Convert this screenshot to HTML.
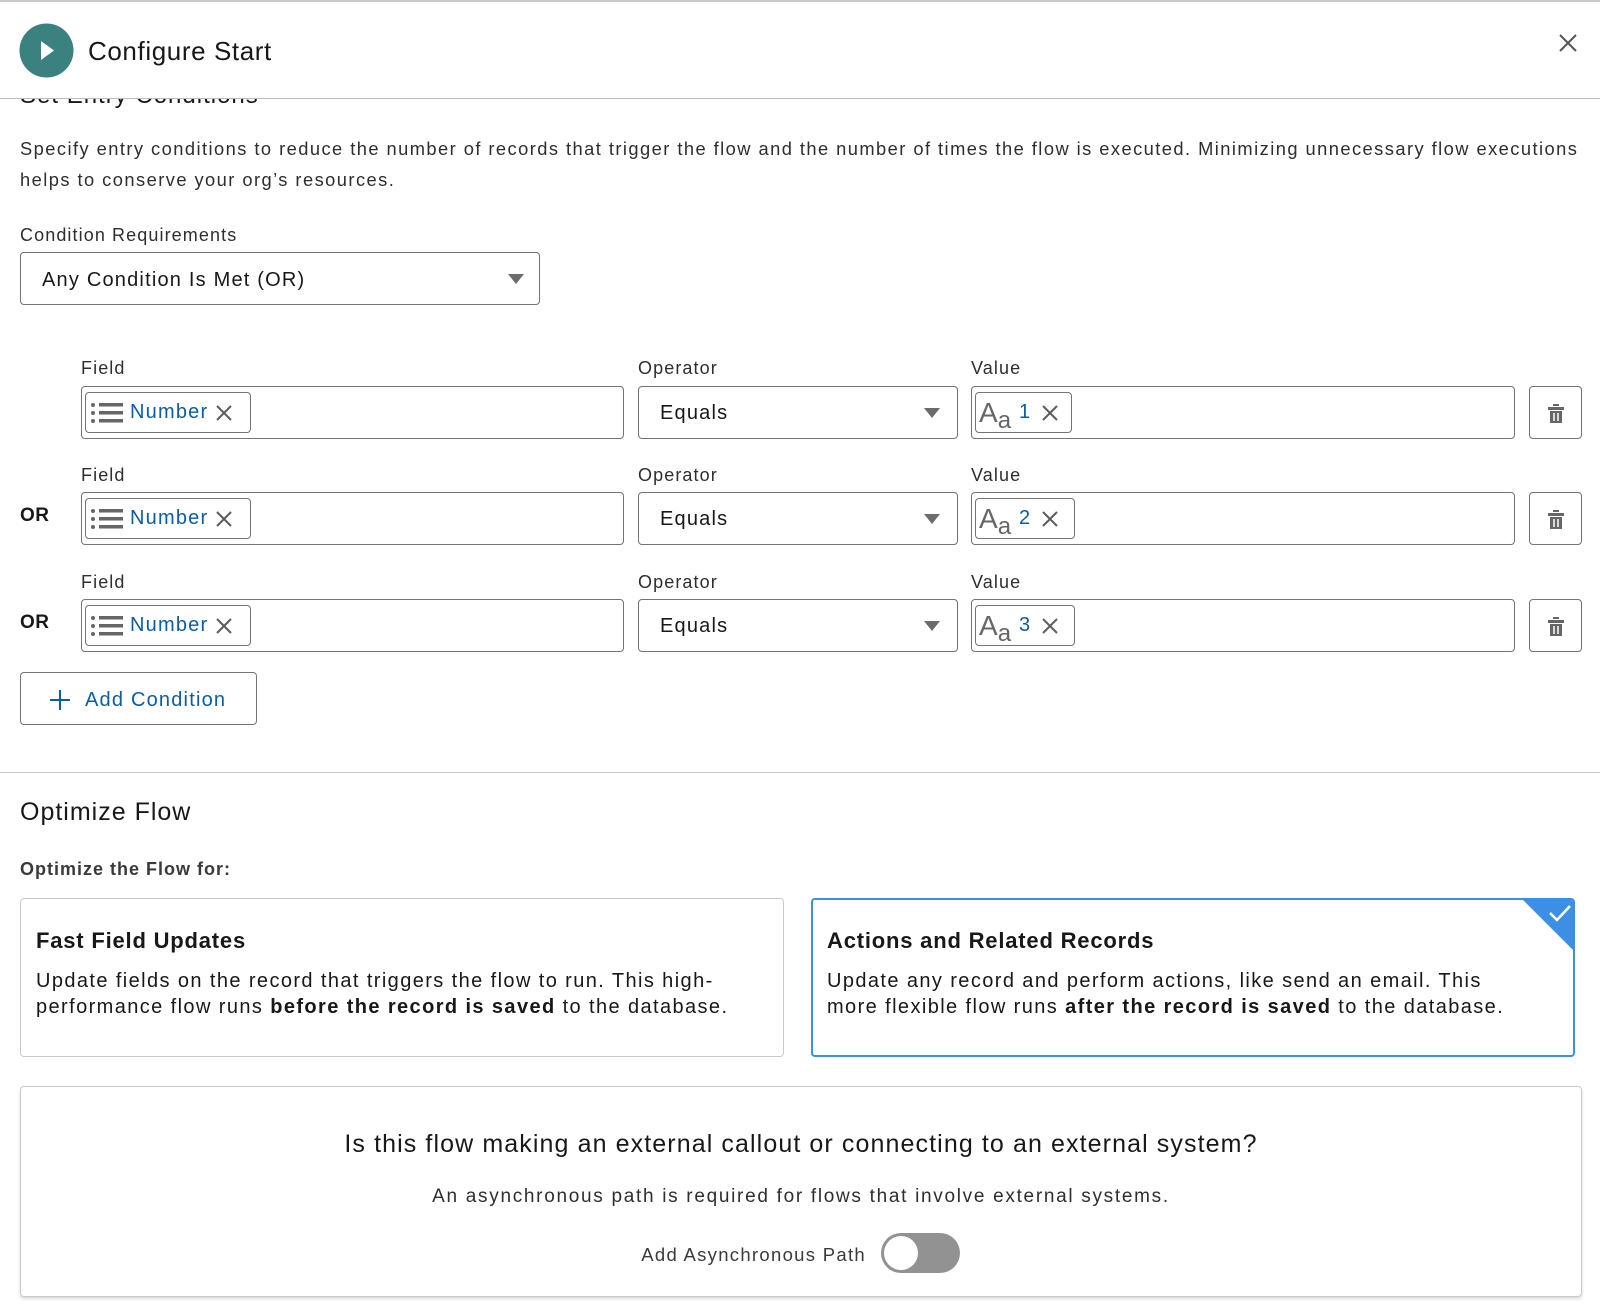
<!DOCTYPE html>
<html><head><meta charset="utf-8"><style>
*{box-sizing:border-box;margin:0;padding:0}
body{width:1600px;height:1311px;background:#fff;font-family:"Liberation Sans",sans-serif;color:#181818;position:relative;overflow:hidden}
.a{position:absolute;white-space:nowrap}
.box{position:absolute;border:1px solid #747474;border-radius:4px;background:#fff}
.lbl{position:absolute;font-size:18px;color:#2e2e2e;letter-spacing:1.1px}
.chip{position:absolute;top:5px;height:41px;border:1px solid #747474;border-radius:4px;display:flex;align-items:center;padding-left:3px}
.blue{color:#0b5cab}
.x{stroke:#5c5c5c;stroke-width:2}
.tri{position:absolute;right:17px;top:21px;width:0;height:0;border-left:8px solid transparent;border-right:8px solid transparent;border-top:10px solid #6b6b6b}
.or{position:absolute;left:20px;font-weight:bold;font-size:19px;letter-spacing:.5px}
.card{position:absolute;top:898px;height:159px;width:764px;border:1px solid #c9c9c9;border-radius:4px;padding:29px 0 0 15px}
.card h3{font-size:22px;font-weight:bold;margin-bottom:14px;letter-spacing:.8px}
.card p{font-size:20px;line-height:26px;letter-spacing:1.4px}
.v{font-size:20px;letter-spacing:1.2px}
</style></head><body>
<div class="a" style="left:0;top:0;width:1600px;height:2px;background:#c9c9c9"></div>
<div class="a" style="left:20px;top:82px;font-size:24px;letter-spacing:1px">Set Entry Conditions</div>
<div class="a" style="left:0;top:2px;width:1600px;height:97px;background:#fff;border-bottom:1px solid #bdbdbd"></div>
<svg class="a" style="left:19px;top:23px" width="55" height="55"><circle cx="27.5" cy="27.5" r="27" fill="#3a8180"/><path d="M22 18 L35 27.5 L22 37Z" fill="#fff"/></svg>
<div class="a" style="left:88px;top:36px;font-size:26px;color:#181818;letter-spacing:.6px">Configure Start</div>
<svg class="a" style="left:1559px;top:34px" width="18" height="18"><path d="M1 1L17 17M17 1L1 17" stroke="#555" stroke-width="2"/></svg>

<div class="a" style="left:20px;top:133px;font-size:18.3px;line-height:31px;color:#2e2e2e;white-space:normal;width:1580px;letter-spacing:1.45px">Specify entry conditions to reduce the number of records that trigger the flow and the number of times the flow is executed. Minimizing unnecessary flow executions helps to conserve your org’s resources.</div>
<div class="lbl" style="left:20px;top:225px">Condition Requirements</div>
<div class="box" style="left:20px;top:252px;width:520px;height:53px"><div class="a v" style="left:21px;top:16px">Any Condition Is Met (OR)</div><div class="tri" style="right:15px"></div></div>

<div class="lbl" style="left:81px;top:358px">Field</div><div class="lbl" style="left:638px;top:358px">Operator</div><div class="lbl" style="left:971px;top:358px">Value</div>
<div class="box" style="left:81px;top:386px;width:543px;height:53px"><div class="chip" style="left:3px;width:166px"><svg width="36" height="30"><g fill="#666"><circle cx="4" cy="7" r="2"/><circle cx="4" cy="15" r="2"/><circle cx="4" cy="23" r="2"/><rect x="10" y="5" width="24" height="3.5"/><rect x="10" y="13" width="24" height="3.5"/><rect x="10" y="21" width="24" height="3.5"/></g></svg><span class="blue v" style="margin-left:5px">Number</span><svg style="margin-left:7px" width="18" height="18"><path class="x" d="M2 2L16 16M16 2L2 16"/></svg></div></div>
<div class="box" style="left:638px;top:386px;width:320px;height:53px"><div class="a v" style="left:21px;top:15px">Equals</div><div class="tri"></div></div>
<div class="box" style="left:971px;top:386px;width:544px;height:53px"><div class="chip" style="left:3px;width:97px"><span style="font-size:28px;color:#666;line-height:1">A</span><span style="font-size:24px;color:#666;position:relative;top:8px">a</span><span class="blue v" style="margin-left:8px">1</span><svg style="margin-left:10px" width="18" height="18"><path class="x" d="M2 2L16 16M16 2L2 16"/></svg></div></div>
<div class="box" style="left:1529px;top:386px;width:53px;height:53px"><svg style="position:absolute;left:17px;top:15px" width="18" height="22"><path d="M6 2h6v2H6z M1 5h16v3H1z M3 9h12v12H3z" fill="#666"/><path d="M7 11v8M11 11v8" stroke="#fff" stroke-width="1.5"/></svg></div>

<div class="lbl" style="left:81px;top:465px">Field</div><div class="lbl" style="left:638px;top:465px">Operator</div><div class="lbl" style="left:971px;top:465px">Value</div>
<div class="or" style="top:505px">OR</div>
<div class="box" style="left:81px;top:492px;width:543px;height:53px"><div class="chip" style="left:3px;width:166px"><svg width="36" height="30"><g fill="#666"><circle cx="4" cy="7" r="2"/><circle cx="4" cy="15" r="2"/><circle cx="4" cy="23" r="2"/><rect x="10" y="5" width="24" height="3.5"/><rect x="10" y="13" width="24" height="3.5"/><rect x="10" y="21" width="24" height="3.5"/></g></svg><span class="blue v" style="margin-left:5px">Number</span><svg style="margin-left:7px" width="18" height="18"><path class="x" d="M2 2L16 16M16 2L2 16"/></svg></div></div>
<div class="box" style="left:638px;top:492px;width:320px;height:53px"><div class="a v" style="left:21px;top:15px">Equals</div><div class="tri"></div></div>
<div class="box" style="left:971px;top:492px;width:544px;height:53px"><div class="chip" style="left:3px;width:100px"><span style="font-size:28px;color:#666;line-height:1">A</span><span style="font-size:24px;color:#666;position:relative;top:8px">a</span><span class="blue v" style="margin-left:8px">2</span><svg style="margin-left:10px" width="18" height="18"><path class="x" d="M2 2L16 16M16 2L2 16"/></svg></div></div>
<div class="box" style="left:1529px;top:492px;width:53px;height:53px"><svg style="position:absolute;left:17px;top:15px" width="18" height="22"><path d="M6 2h6v2H6z M1 5h16v3H1z M3 9h12v12H3z" fill="#666"/><path d="M7 11v8M11 11v8" stroke="#fff" stroke-width="1.5"/></svg></div>

<div class="lbl" style="left:81px;top:572px">Field</div><div class="lbl" style="left:638px;top:572px">Operator</div><div class="lbl" style="left:971px;top:572px">Value</div>
<div class="or" style="top:612px">OR</div>
<div class="box" style="left:81px;top:599px;width:543px;height:53px"><div class="chip" style="left:3px;width:166px"><svg width="36" height="30"><g fill="#666"><circle cx="4" cy="7" r="2"/><circle cx="4" cy="15" r="2"/><circle cx="4" cy="23" r="2"/><rect x="10" y="5" width="24" height="3.5"/><rect x="10" y="13" width="24" height="3.5"/><rect x="10" y="21" width="24" height="3.5"/></g></svg><span class="blue v" style="margin-left:5px">Number</span><svg style="margin-left:7px" width="18" height="18"><path class="x" d="M2 2L16 16M16 2L2 16"/></svg></div></div>
<div class="box" style="left:638px;top:599px;width:320px;height:53px"><div class="a v" style="left:21px;top:15px">Equals</div><div class="tri"></div></div>
<div class="box" style="left:971px;top:599px;width:544px;height:53px"><div class="chip" style="left:3px;width:100px"><span style="font-size:28px;color:#666;line-height:1">A</span><span style="font-size:24px;color:#666;position:relative;top:8px">a</span><span class="blue v" style="margin-left:8px">3</span><svg style="margin-left:10px" width="18" height="18"><path class="x" d="M2 2L16 16M16 2L2 16"/></svg></div></div>
<div class="box" style="left:1529px;top:599px;width:53px;height:53px"><svg style="position:absolute;left:17px;top:15px" width="18" height="22"><path d="M6 2h6v2H6z M1 5h16v3H1z M3 9h12v12H3z" fill="#666"/><path d="M7 11v8M11 11v8" stroke="#fff" stroke-width="1.5"/></svg></div>

<div class="box" style="left:20px;top:672px;width:237px;height:53px"><svg style="position:absolute;left:28px;top:16px" width="22" height="22"><path d="M11 1v20M1 11h20" stroke="#0b5cab" stroke-width="2"/></svg><div class="a blue v" style="left:64px;top:16px">Add Condition</div></div>

<div class="a" style="left:0;top:772px;width:1600px;height:1px;background:#c9c9c9"></div>
<div class="a" style="left:20px;top:798px;font-size:25px;letter-spacing:1px">Optimize Flow</div>
<div class="a" style="left:20px;top:859px;font-size:18px;font-weight:bold;color:#3a3a3a;letter-spacing:1px">Optimize the Flow for:</div>

<div class="card" style="left:20px"><h3>Fast Field Updates</h3><p>Update fields on the record that triggers the flow to run. This high-<br>performance flow runs <b>before the record is saved</b> to the database.</p></div>
<div class="card" style="left:811px;border:2px solid #3d8fe6;overflow:hidden;padding:28px 0 0 14px"><h3>Actions and Related Records</h3><p>Update any record and perform actions, like send an email. This<br>more flexible flow runs <b>after the record is saved</b> to the database.</p>
<svg style="position:absolute;right:0;top:0" width="50" height="50"><path d="M0 0H50V50Z" fill="#3d8fe6"/><path d="M27 13L34 20L47 6" stroke="#fff" stroke-width="2.5" fill="none"/></svg></div>

<div class="a" style="left:20px;top:1086px;width:1562px;height:211px;border:1px solid #c9c9c9;border-radius:4px;box-shadow:0 2px 3px rgba(0,0,0,.15)"></div>
<div class="a" style="left:20px;width:1562px;top:1130px;text-align:center;font-size:25px;letter-spacing:1.1px">Is this flow making an external callout or connecting to an external system?</div>
<div class="a" style="left:20px;width:1562px;top:1186px;text-align:center;font-size:19px;color:#2e2e2e;letter-spacing:1.7px">An asynchronous path is required for flows that involve external systems.</div>
<div class="a" style="left:540px;width:326px;top:1244px;text-align:right;font-size:18.5px;color:#3a3a3a;letter-spacing:1.3px">Add Asynchronous Path</div>
<div class="a" style="left:881px;top:1233px;width:79px;height:40px;border-radius:20px;background:#929292"><div style="position:absolute;left:3px;top:3px;width:34px;height:34px;border-radius:50%;background:#fff"></div></div>
</body></html>
